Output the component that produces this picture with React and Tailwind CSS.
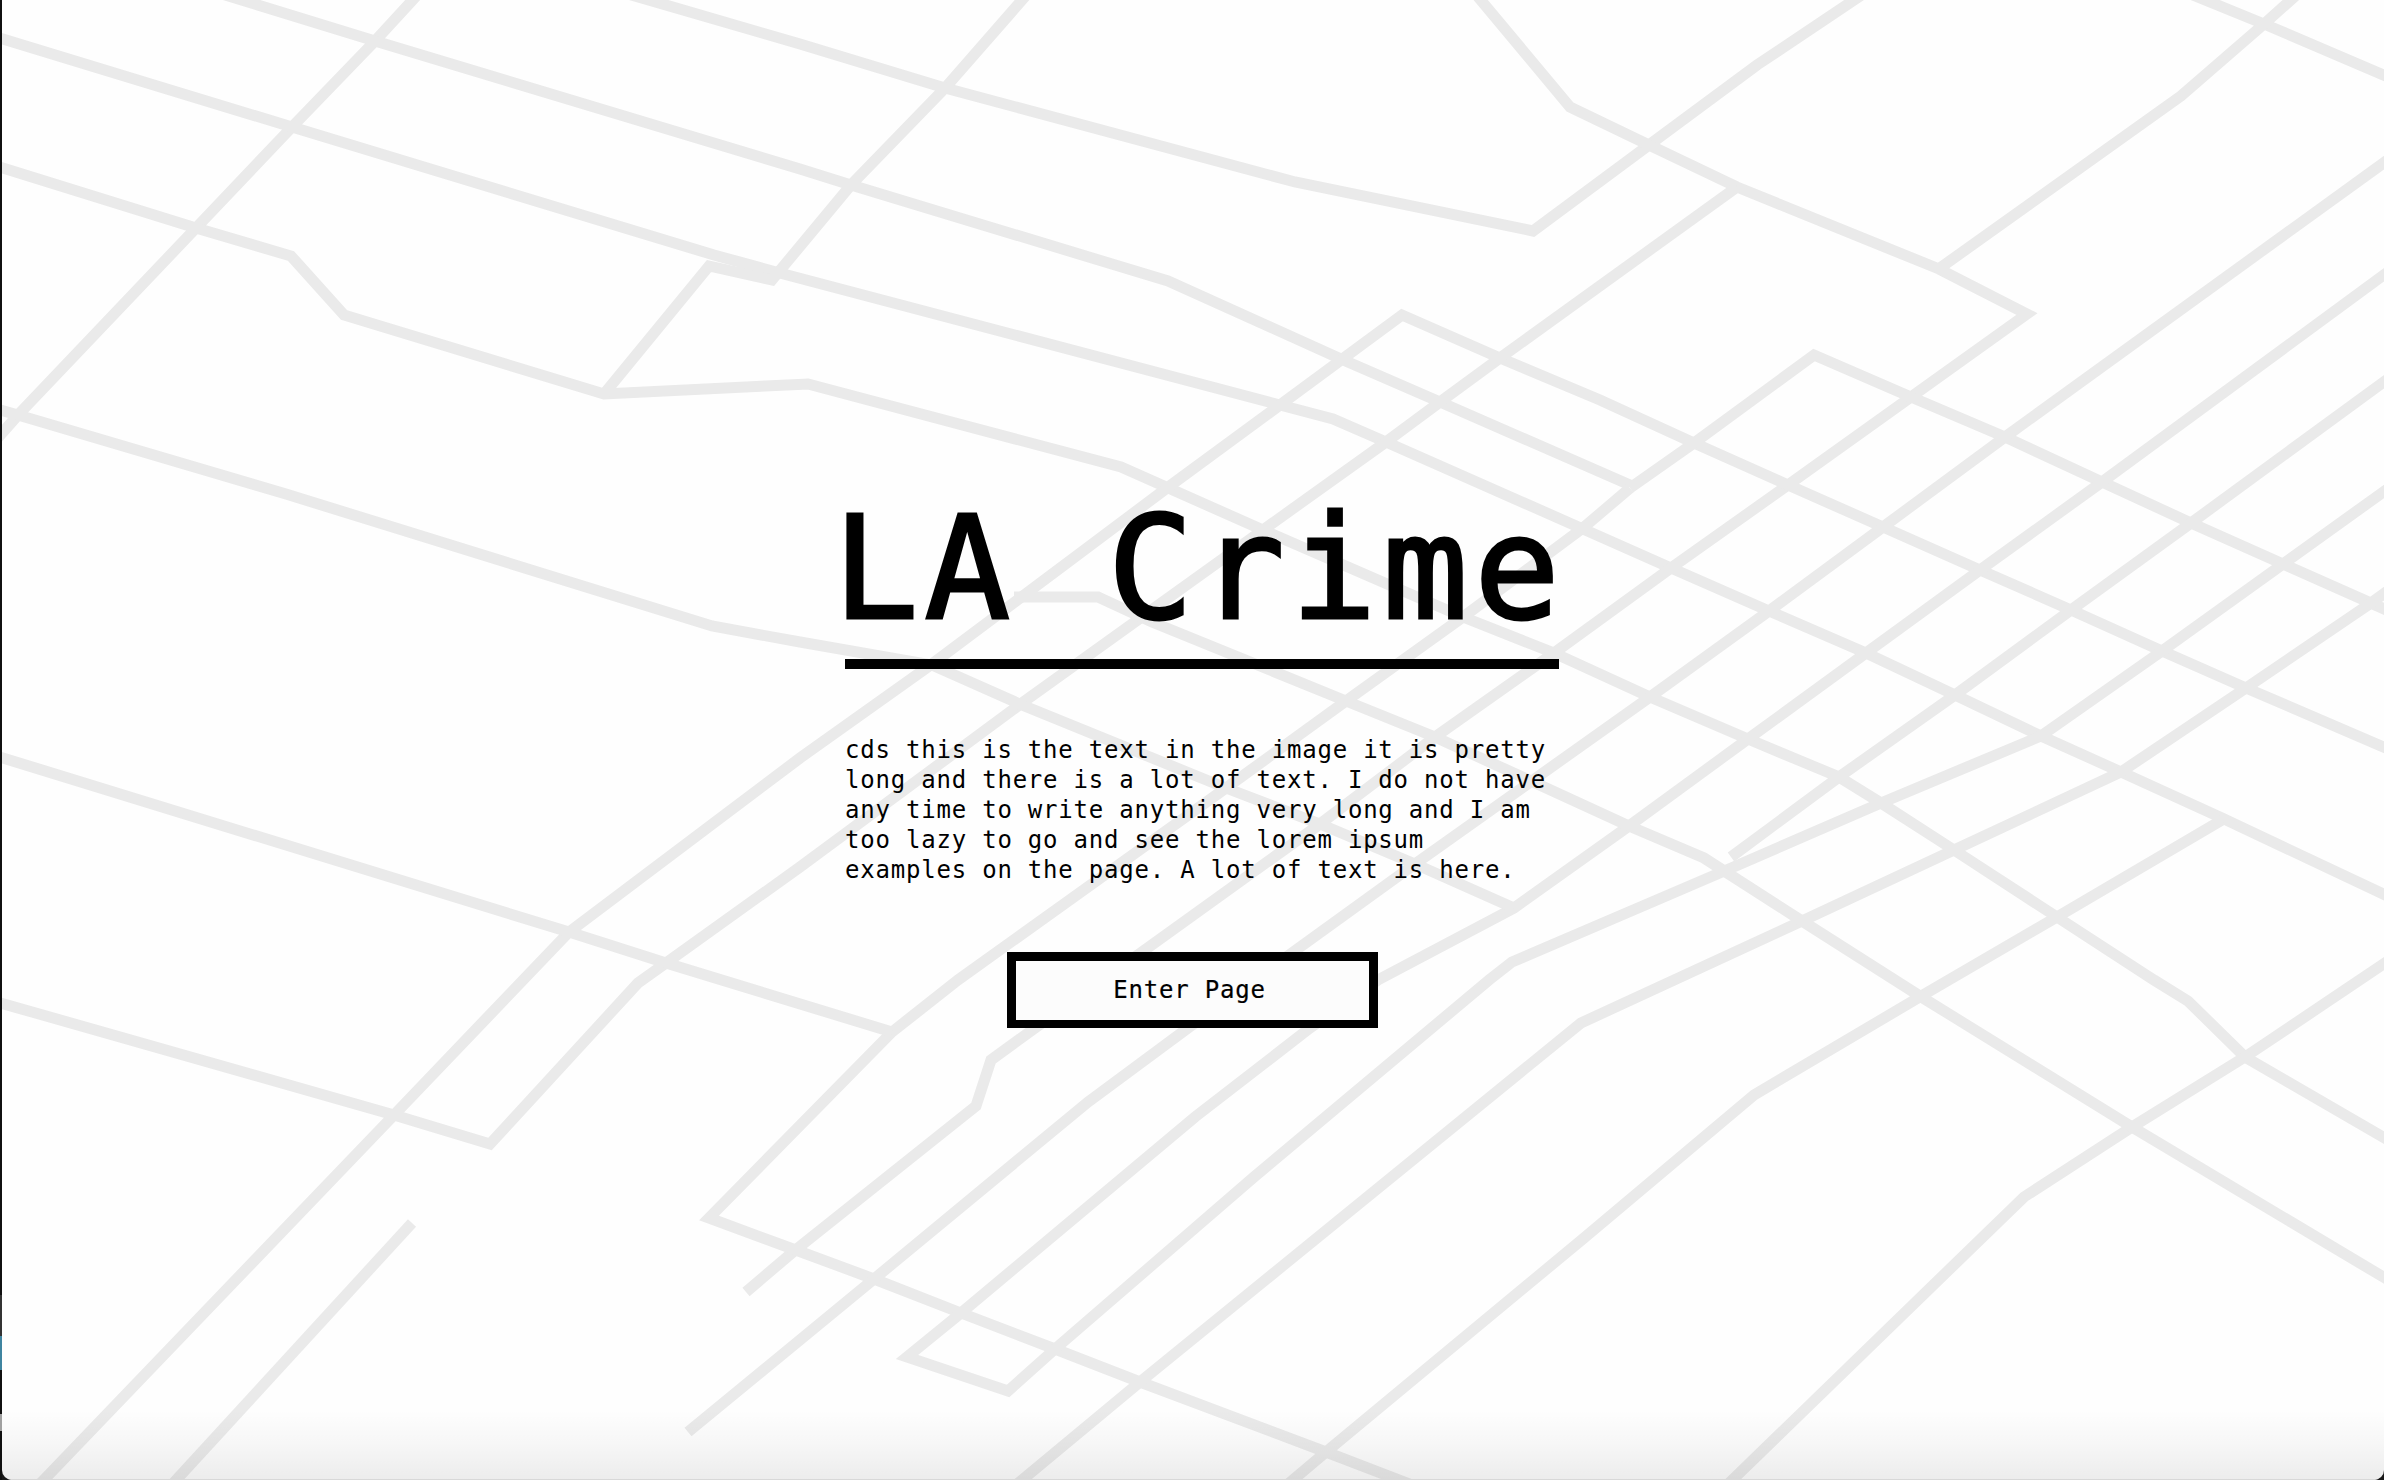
const ROADS = [
  "420,-8 375,41 292,127 196,228 18,415 -4,440",
  "222,-6 375,41 800,169 851,185 1168,281 1341,359 1440,402 1630,485",
  "-10,35 292,127 714,255 776,272 1280,405 1333,419 1386,442 1583,529 1671,568 1769,611 1866,653 1955,695 2041,736 2121,772 2222,818 2400,902",
  "-10,164 196,228 291,256 344,315 604,394 808,384 1121,467 1263,530 1463,617 1554,653 1650,697 1748,739 1839,777 1881,803 1954,850 2057,917 2154,980 2188,1001 2245,1057 2400,1147",
  "604,394 709,266 772,280 851,185 945,88 1029,-8",
  "628,-6 800,44 945,88 1295,182 1533,231 1649,145 1757,65 1866,-8",
  "1474,-8 1570,107 1649,145 1737,187 1939,269 2027,314 1911,397 1788,485 1671,568 1554,653 1435,737 1320,824 1142,952 1035,1028 991,1060 976,1106 793,1252 746,1292",
  "50,1490 37,1487 394,1115 569,932 800,758 932,664 1167,488 1280,405 1402,315 1500,358 1600,400 1694,443 1788,485 1883,527 1980,570 2071,610 2162,651 2246,688 2400,754",
  "1737,187 1500,358 1440,402 1386,442 1263,530 1022,703 800,867 666,963 638,983 490,1144 394,1115 -10,1000",
  "1630,488 1583,528 1463,617 1346,701 1226,788 958,980 892,1032 709,1218 793,1249 874,1279 961,1313 1055,1349 1140,1382 1326,1452 1425,1490",
  "1630,488 1694,443 1814,355 1911,397 2005,437 2102,482 2191,523 2283,564 2400,616",
  "2400,151 2005,437 1883,527 1769,611 1650,697 1415,864 1188,1028 1088,1102 874,1279 688,1432",
  "2400,263 2102,482 1980,570 1866,653 1748,739 1629,826 1514,908 1378,980 1310,1028 1195,1117 961,1313 907,1357 1008,1391 1055,1349 1254,1177 1489,980 1512,962 1722,872 1881,803 2041,736 2162,651 2283,564 2400,480",
  "2400,370 2191,523 2071,610 1955,695 1839,777 1731,857",
  "2400,582 2371,603 2246,688 2121,772 1954,850 1802,921 1581,1023 1140,1382 1010,1490",
  "2222,820 2057,917 1923,995 1754,1095 1584,1238 1326,1452 1281,1490",
  "2400,953 2245,1057 2132,1127 2024,1197 1722,1490",
  "412,1223 167,1490",
  "2188,-7 2264,24 2400,82",
  "2302,-10 2264,24 2181,96 1940,268",
  "-10,407 18,415 286,494 712,626 800,642 932,665 1022,705 1226,788 1320,824 1415,864 1514,908",
  "1014,597 1098,597 1152,622 1346,701 1435,737 1629,826 1704,858 1802,921 1923,998 2132,1127 2400,1287",
  "-10,754 569,932 666,963 892,1032",
];

function StreetMap() {
  return (
    <svg
      className="absolute inset-0 h-full w-full blur-[0.6px]"
      viewBox="2 0 2382 1480"
      preserveAspectRatio="none"
      fill="none"
      stroke="#eaeaea"
      strokeWidth="11"
      strokeMiterlimit="10"
      aria-hidden="true"
    >
      {ROADS.map((points) => (
        <polyline key={points} points={points} />
      ))}
    </svg>
  );
}

function DesktopEdge() {
  return (
    <div className="flex w-0.5 shrink-0 flex-col bg-[#101010]">
      <div className="mt-[1295px] h-[41px] bg-[#333333]" />
      <div className="h-[34px] bg-[#3f84a0]" />
      <div className="mt-11 h-[17px] bg-[#a0a0a0]" />
    </div>
  );
}

export default function App() {
  return (
    <div className="flex h-screen w-full overflow-hidden bg-[#181818] font-['DejaVu_Sans_Mono',monospace] text-black">
      <DesktopEdge />
      <main className="relative flex flex-1 flex-col overflow-hidden rounded-b-[10px] bg-[#fefefe]">
        <StreetMap />
        <div className="absolute inset-x-0 bottom-0 h-[70px] border-b border-[#d8d8d8] bg-linear-to-b from-black/0 via-black/3 to-black/7" />
        <section className="relative ml-[843px] flex w-[714px] flex-col pt-[483px]">
          <h1 className="-ml-3 h-44 text-[142px] leading-[172px] tracking-[6.1px] whitespace-nowrap [-webkit-text-stroke:3px_black]">
            LA Crime
          </h1>
          <div className="h-2.5 bg-black" />
          <p className="mt-[66px] text-[24px] leading-[30px] tracking-[0.79px] whitespace-nowrap">
            cds this is the text in the image it is pretty
            <br />
            long and there is a lot of text. I do not have
            <br />
            any time to write anything very long and I am
            <br />
            too lazy to go and see the lorem ipsum
            <br />
            examples on the page. A lot of text is here.
          </p>
          <button className="mt-[67px] ml-[162px] flex h-[76px] w-[371px] items-center justify-center border-[9px] border-b-8 border-black bg-[#fcfcfc] pr-1.5 pb-0.5 text-[24px] tracking-[0.79px] [-webkit-text-stroke:0.2px_black]">
            Enter Page
          </button>
        </section>
      </main>
    </div>
  );
}
